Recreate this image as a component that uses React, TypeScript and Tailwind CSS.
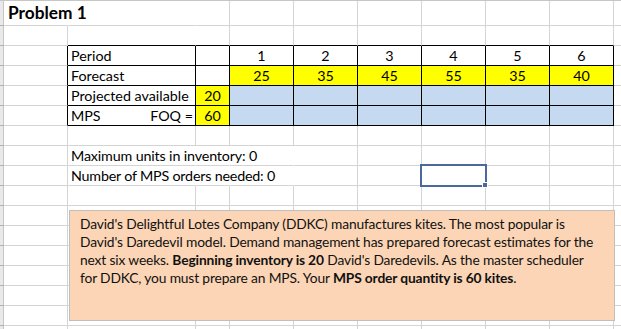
import React from "react";

type B = "g" | "k" | "n";

function Cell({
  r = "g",
  b = "g",
  bg = "",
  align = "l",
  children,
}: {
  r?: B;
  b?: B;
  bg?: string;
  align?: "l" | "c" | "r";
  children?: React.ReactNode;
}) {
  const rc = r === "g" ? "border-r-[#d4d4d4]" : r === "k" ? "border-r-black" : "border-r-transparent";
  const bc = b === "g" ? "border-b-[#d4d4d4]" : b === "k" ? "border-b-black" : "border-b-transparent";
  const al = align === "c" ? "justify-center" : align === "r" ? "justify-end pr-[2px]" : "justify-start pl-[3px]";
  return (
    <div className={`relative flex items-start whitespace-nowrap overflow-visible border-r border-b ${rc} ${bc} ${bg} ${al} leading-[19px]`}>
      {children}
    </div>
  );
}

function Strip() {
  return <div className="border-r border-b border-r-[#c6c6c6] border-b-[#b0b0b0] bg-[#e9e9e9]" />;
}

function Edge({ b = "g" }: { b?: B }) {
  return <div className={`border-b ${b === "g" ? "border-b-[#d4d4d4]" : "border-b-transparent"}`} />;
}

const periods = ["1", "2", "3", "4", "5", "6"];
const forecast = ["25", "35", "45", "55", "35", "40"];

export default function App() {
  return (
    <div
      className="relative h-[329px] w-[621px] overflow-hidden bg-white text-black"
      style={{ fontFamily: "Lato, 'Liberation Sans', sans-serif" }}
    >
      <div className="border-t border-t-[#c6c6c6] grid grid-cols-[4px_64px_128px_34px_64px_64px_64px_64px_64px_64px_7px] grid-rows-[25px_repeat(16,20px)] text-[14.3px]">
        {/* Row 1: title */}
        <Strip />
        <Cell r="n">
          <span className="absolute left-[4px] top-[1px] text-[17.3px] font-bold leading-[22px]">Problem 1</span>
        </Cell>
        <Cell r="n" />
        <Cell />
        {periods.map((p) => (
          <Cell key={"t" + p} />
        ))}
        <Edge />

        {/* Row 2 */}
        <Strip />
        <Cell />
        <Cell r="n" b="k" />
        <Cell b="k" />
        {periods.map((p) => (
          <Cell key={"e" + p} b="k" />
        ))}
        <Edge />

        {/* Row 3: Period */}
        <Strip />
        <Cell r="k" />
        <Cell r="k" b="k">Period</Cell>
        <Cell r="k" b="k" />
        {periods.map((p) => (
          <Cell key={"p" + p} r="k" b="k" align="c">
            {p}
          </Cell>
        ))}
        <Edge />

        {/* Row 4: Forecast */}
        <Strip />
        <Cell r="k" />
        <Cell r="k" b="k">Forecast</Cell>
        <Cell r="k" b="k" />
        {forecast.map((f, i) => (
          <Cell key={"f" + i} r="k" b="k" align="c" bg="bg-[#ffff00]">
            {f}
          </Cell>
        ))}
        <Edge />

        {/* Row 5: Projected available */}
        <Strip />
        <Cell r="k" />
        <Cell r="k" b="k">Projected available</Cell>
        <Cell r="k" b="k" align="c" bg="bg-[#ffff00]">
          20
        </Cell>
        {periods.map((p) => (
          <Cell key={"pa" + p} r="k" b="k" bg="bg-[#c5d9f1]" />
        ))}
        <Edge />

        {/* Row 6: MPS */}
        <Strip />
        <Cell r="k" />
        <div className="flex justify-between whitespace-nowrap border-r border-b border-r-black border-b-black pl-[3px] pr-[2px] leading-[19px]">
          <span>MPS</span>
          <span>FOQ =</span>
        </div>
        <Cell r="k" b="k" align="c" bg="bg-[#ffff00]">
          60
        </Cell>
        {periods.map((p) => (
          <Cell key={"m" + p} r="k" b="k" bg="bg-[#c5d9f1]" />
        ))}
        <Edge />

        {/* Row 7 */}
        <Strip />
        <Cell />
        <Cell />
        <Cell />
        {periods.map((p) => (
          <Cell key={"r7" + p} />
        ))}
        <Edge />

        {/* Row 8 */}
        <Strip />
        <Cell />
        <Cell r="n">
          <span className="tracking-[-0.15px]">Maximum units in inventory: 0</span>
        </Cell>
        <Cell r="n" />
        <Cell r="n" />
        <Cell />
        <Cell />
        <Cell />
        <Cell />
        <Cell />
        <Edge />

        {/* Row 9 */}
        <Strip />
        <Cell />
        <Cell r="n">
          <span className="tracking-[-0.2px]">Number of MPS orders needed: 0</span>
        </Cell>
        <Cell r="n" />
        <Cell r="n" />
        <Cell />
        <Cell />
        <Cell />
        <Cell />
        <Cell />
        <Edge />

        {/* Rows 10-17 */}
        {[10, 11, 12, 13, 14, 15, 16, 17].map((n) => (
          <React.Fragment key={"row" + n}>
            <Strip />
            <Cell />
            <Cell />
            <Cell />
            <Cell />
            <Cell />
            <Cell />
            <Cell />
            <Cell />
            <Cell />
            <Edge />
          </React.Fragment>
        ))}
      </div>

      {/* Selected cell */}
      <div className="absolute left-[420px] top-[164px] h-[23px] w-[67px] border-2 border-[#4a6a9e]" />
      <div className="absolute left-[482px] top-[182px] h-[6px] w-[6px] border border-white bg-[#4a6a9e]" />

      {/* Text box */}
      <div className="absolute left-[69px] top-[210px] h-[111px] w-[546px] border border-[#bfbfbf] bg-[#fbd5b5] pl-[10px] pt-[4px] text-[13.8px] leading-[18px] tracking-[-0.15px] text-[#111]">
        <div className="whitespace-nowrap">David's Delightful Lotes Company (DDKC) manufactures kites. The most popular is</div>
        <div className="whitespace-nowrap">David's Daredevil model. Demand management has prepared forecast estimates for the</div>
        <div className="whitespace-nowrap">
          next six weeks. <b>Beginning inventory is 20</b> David's Daredevils. As the master scheduler
        </div>
        <div className="whitespace-nowrap">
          for DDKC, you must prepare an MPS. Your <b>MPS order quantity is 60 kites</b>.
        </div>
      </div>
    </div>
  );
}
